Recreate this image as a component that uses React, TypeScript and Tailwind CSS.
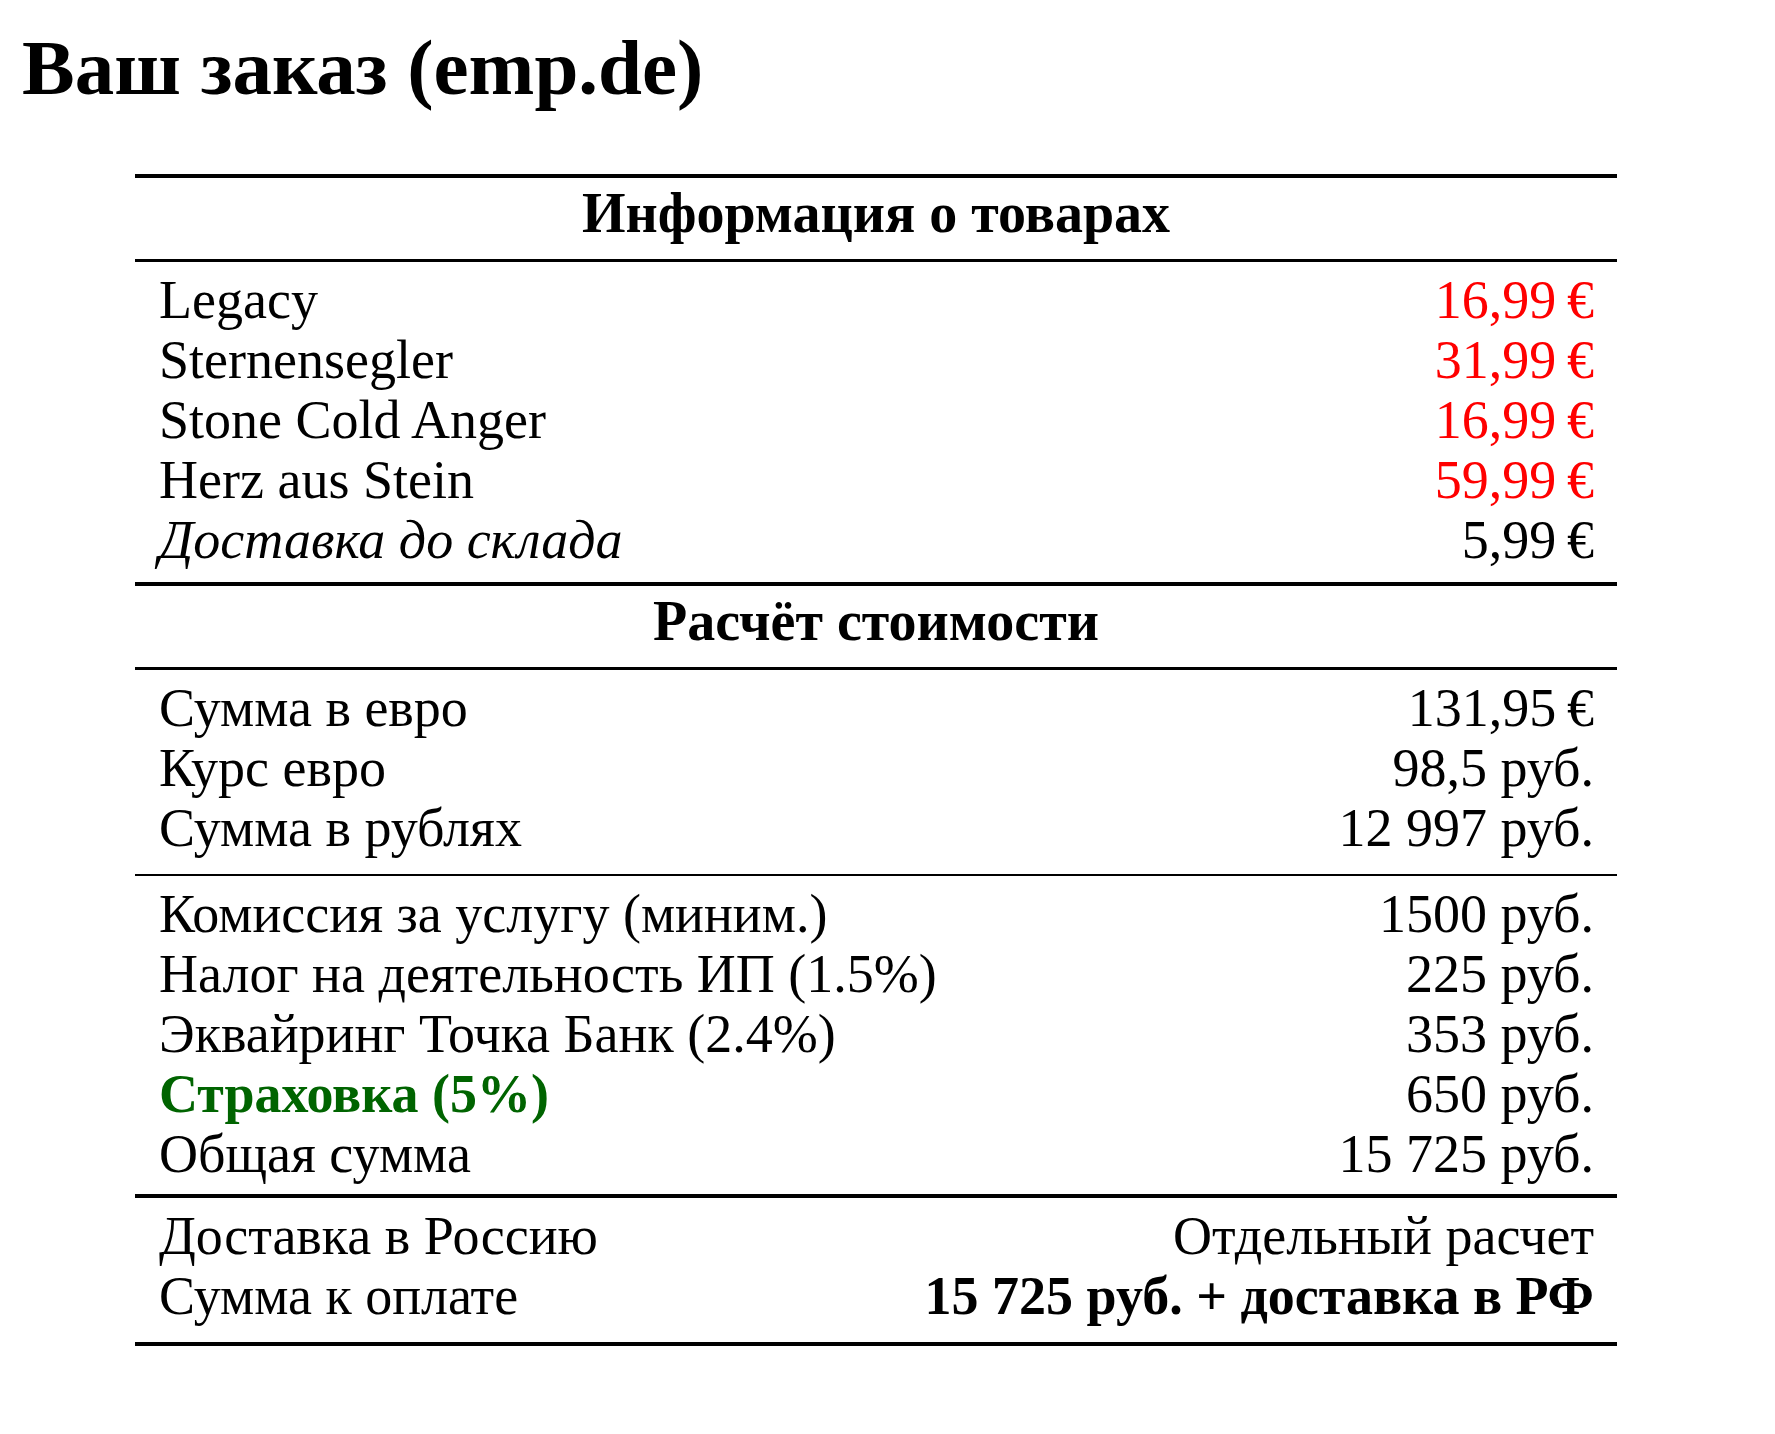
import React from "react";

type Row = { label: React.ReactNode; value: React.ReactNode };

const items: Row[] = [
  { label: "Legacy", value: <span className="text-[#ff0000]">16,99&#8201;€</span> },
  { label: "Sternensegler", value: <span className="text-[#ff0000]">31,99&#8201;€</span> },
  { label: "Stone Cold Anger", value: <span className="text-[#ff0000]">16,99&#8201;€</span> },
  { label: "Herz aus Stein", value: <span className="text-[#ff0000]">59,99&#8201;€</span> },
  { label: <span className="italic">Доставка до склада</span>, value: <span>5,99&#8201;€</span> },
];

const calc: Row[] = [
  { label: "Сумма в евро", value: "131,95\u2009€" },
  { label: "Курс евро", value: "98,5 руб." },
  { label: "Сумма в рублях", value: "12 997 руб." },
];

const fees: Row[] = [
  { label: "Комиссия за услугу (миним.)", value: "1500 руб." },
  { label: "Налог на деятельность ИП (1.5%)", value: "225 руб." },
  { label: "Эквайринг Точка Банк (2.4%)", value: "353 руб." },
  { label: <span className="font-bold text-[#006400]">Страховка (5%)</span>, value: "650 руб." },
  { label: "Общая сумма", value: "15 725 руб." },
];

const totals: Row[] = [
  { label: "Доставка в Россию", value: "Отдельный расчет" },
  { label: "Сумма к оплате", value: <span className="font-bold">15 725 руб. + доставка в РФ</span> },
];

function Rows({ rows, pad }: { rows: Row[]; pad: string }) {
  return (
    <div className={pad}>
      {rows.map((r, i) => (
        <div key={i} className="flex justify-between pl-[24px] pr-[23px] h-[60px] leading-[60px] whitespace-nowrap">
          <span>{r.label}</span>
          <span>{r.value}</span>
        </div>
      ))}
    </div>
  );
}

function Header({ children }: { children: React.ReactNode }) {
  return (
    <div className="text-center font-bold text-[56px] leading-[63px] pt-[4px] pb-[14px]">{children}</div>
  );
}

export default function App() {
  return (
    <div
      className="bg-white text-black w-[1775px] min-h-[1434px]"
      style={{ fontFamily: '"Liberation Serif", "Times New Roman", serif' }}
    >
      <h1 className="font-bold text-[79px] leading-[88px] pl-[22px] pt-[24px]">Ваш заказ (emp.de)</h1>
      <div className="ml-[135px] w-[1482px] mt-[62px] text-[54px]">
        <div className="border-t-[4px] border-black" />
        <Header>Информация о товарах</Header>
        <div className="border-t-[3px] border-black" />
        <Rows rows={items} pad="pt-[8px] pb-[12px]" />
        <div className="border-t-[4px] border-black" />
        <Header>Расчёт стоимости</Header>
        <div className="border-t-[3px] border-black" />
        <Rows rows={calc} pad="pt-[8px] pb-[16px]" />
        <div className="border-t-[2px] border-black" />
        <Rows rows={fees} pad="pt-[8px] pb-[10px]" />
        <div className="border-t-[4px] border-black" />
        <Rows rows={totals} pad="pt-[8px] pb-[16px]" />
        <div className="border-t-[4px] border-black" />
      </div>
    </div>
  );
}
